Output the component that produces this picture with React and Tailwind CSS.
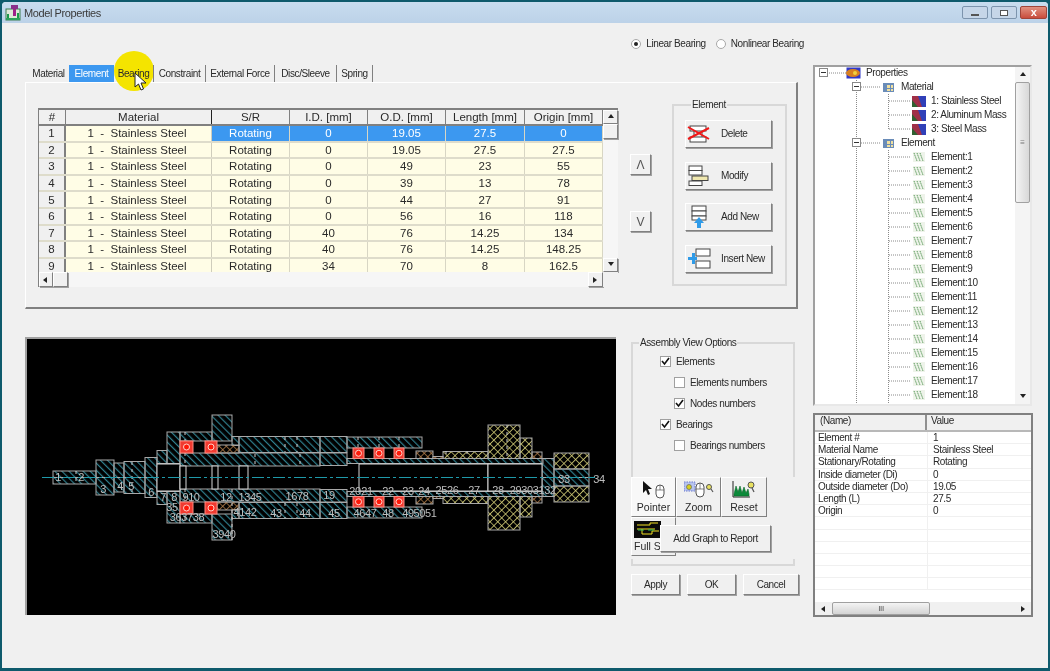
import React from "react";

const tabs = ["Material", "Element", "Bearing", "Constraint", "External Force", "Disc/Sleeve", "Spring"];
const tabWidths = ["w-[41px]", "w-[45px]", "w-[40px]", "w-[52px]", "w-[69px]", "w-[62px]", "w-[36px]"];

const columns = [
  { label: "#", width: "w-[27px]" },
  { label: "Material", width: "w-[146px]" },
  { label: "S/R", width: "w-[78px]" },
  { label: "I.D. [mm]", width: "w-[78px]" },
  { label: "O.D. [mm]", width: "w-[78px]" },
  { label: "Length [mm]", width: "w-[79px]" },
  { label: "Origin [mm]", width: "w-[78px]" },
];

const rows = [
  ["0", "19.05", "27.5", "0"],
  ["0", "19.05", "27.5", "27.5"],
  ["0", "49", "23", "55"],
  ["0", "39", "13", "78"],
  ["0", "44", "27", "91"],
  ["0", "56", "16", "118"],
  ["40", "76", "14.25", "134"],
  ["40", "76", "14.25", "148.25"],
  ["34", "70", "8", "162.5"],
];

const properties = [
  ["Element #", "1"],
  ["Material Name", "Stainless Steel"],
  ["Stationary/Rotating", "Rotating"],
  ["Inside diameter (Di)", "0"],
  ["Outside diameter (Do)", "19.05"],
  ["Length (L)", "27.5"],
  ["Origin", "0"],
  ["", ""],
  ["", ""],
  ["", ""],
  ["", ""],
  ["", ""],
  ["", ""],
];

const raised = "bg-[#f0f0f0] border border-t-white border-l-white border-r-[#808080] border-b-[#808080] shadow-[1px_1px_0_#a0a0a0]";

function Arrow({ dir }) {
  const points = {
    up: "0,4 3,0 6,4",
    down: "0,0 3,4 6,0",
    left: "4,0 0,3 4,6",
    right: "0,0 4,3 0,6",
  };
  return (
    <svg width="6" height="6" viewBox="0 0 6 6">
      <polygon points={points[dir]} fill="#222" />
    </svg>
  );
}

function ScrollBtn({ dir, className = "" }) {
  return (
    <div className={`flex shrink-0 items-center justify-center ${raised} ${className}`}>
      <Arrow dir={dir} />
    </div>
  );
}

function AppIcon() {
  return (
    <svg width="16" height="16" viewBox="0 0 16 16">
      <rect x="1" y="4" width="14" height="11" fill="#dfe8d8" stroke="#3d7d50" />
      <rect x="2" y="9" width="2" height="6" fill="#1b9a4a" />
      <rect x="6" y="0" width="7" height="4" fill="#8a2f8a" />
      <rect x="8" y="4" width="3" height="7" fill="#a0208a" />
      <rect x="12" y="8" width="2" height="7" fill="#1b9a4a" />
      <rect x="1" y="13" width="14" height="2" fill="#2ea05a" />
    </svg>
  );
}

function DeleteIcon() {
  return (
    <svg width="24" height="18" viewBox="0 0 24 18">
      <rect x="3" y="1" width="16" height="5" fill="#fff" stroke="#444" />
      <rect x="3" y="12" width="16" height="5" fill="#fff" stroke="#444" />
      <path d="M7 6 V12 M15 6 V12" stroke="#444" />
      <path d="M1 2 L22 14 M1 14 L22 3" stroke="#f01818" strokeWidth="2" />
    </svg>
  );
}

function ModifyIcon() {
  return (
    <svg width="22" height="22" viewBox="0 0 22 22">
      <rect x="1" y="1" width="13" height="4.5" fill="#fff" stroke="#444" />
      <rect x="1" y="5.5" width="13" height="4.5" fill="#fff" stroke="#444" />
      <rect x="1" y="16" width="13" height="4.5" fill="#fff" stroke="#444" />
      <rect x="4" y="11" width="16" height="4.5" fill="#f0e8b0" stroke="#444" />
    </svg>
  );
}

function AddIcon() {
  return (
    <svg width="18" height="24" viewBox="0 0 18 24">
      <rect x="2" y="1" width="14" height="5" fill="#fff" stroke="#444" />
      <rect x="2" y="6" width="14" height="5" fill="#fff" stroke="#444" />
      <rect x="2" y="11" width="14" height="4" fill="#fff" stroke="#444" />
      <path d="M9 12 L14 18 H11 V23 H7 V18 H4 Z" fill="#2f9be8" />
    </svg>
  );
}

function InsertIcon() {
  return (
    <svg width="24" height="22" viewBox="0 0 24 22">
      <rect x="9" y="1" width="14" height="7" fill="#fff" stroke="#444" />
      <rect x="9" y="13" width="14" height="7" fill="#fff" stroke="#444" />
      <path d="M1 9 H5 V5 H8 V9 H10 V12 H8 V16 H5 V12 H1 Z" fill="#2f9be8" />
    </svg>
  );
}

function ActionButton({ icon, label }) {
  return (
    <div className={`flex h-[28px] w-[87px] items-center ${raised}`}>
      <div className="flex w-[26px] shrink-0 justify-center">{icon}</div>
      <span className="ml-[9px] whitespace-nowrap">{label}</span>
    </div>
  );
}

function PointerIcon() {
  return (
    <svg width="24" height="20" viewBox="0 0 24 20">
      <path d="M1 1 V13 L4 10 L6 15 L8 14 L6 9 H10 Z" fill="#111" />
      <rect x="14" y="5" width="8" height="13" rx="4" fill="#fff" stroke="#555" />
      <path d="M14 10 H22 M18 5 V10" stroke="#555" strokeWidth="0.7" />
    </svg>
  );
}

function ZoomIcon() {
  return (
    <svg width="30" height="20" viewBox="0 0 30 20">
      <rect x="0" y="2" width="11" height="9" fill="#b8c4ee" stroke="#6a7ad0" strokeDasharray="1.5 1" />
      <circle cx="5" cy="7" r="2.5" fill="#d8d020" stroke="#555" strokeWidth="0.6" />
      <rect x="12" y="3" width="8" height="14" rx="4" fill="#fff" stroke="#555" />
      <path d="M12 9 H20 M16 3 V9" stroke="#555" strokeWidth="0.7" />
      <circle cx="25" cy="7" r="2.5" fill="#e8e060" stroke="#555" />
      <path d="M27 9 L29 12" stroke="#555" strokeWidth="1.2" />
    </svg>
  );
}

function ResetIcon() {
  return (
    <svg width="24" height="20" viewBox="0 0 24 20">
      <path d="M1 1 V17 H18" stroke="#222" fill="none" />
      <path d="M2 14 L4 6 L6 12 L8 6 L10 13 L12 7 L14 13 L16 9 L17 14 V16 H2 Z" fill="#0b8a3a" stroke="#0b6a2a" strokeWidth="0.6" />
      <circle cx="19" cy="5" r="3" fill="#e8e060" stroke="#555" />
      <path d="M20 8 L22 12" stroke="#555" strokeWidth="1.2" />
    </svg>
  );
}

function FullIcon() {
  return (
    <svg width="27" height="17" viewBox="0 0 27 17">
      <rect width="27" height="17" fill="#0a0a0a" />
      <path d="M3 4 H16 V2 H24 M3 8 H12 M8 8 V13 H18 V10 H25 M12 8 H21" stroke="#f2e020" fill="none" />
      <path d="M4 9 H10 M14 9 H20" stroke="#2cc45a" />
    </svg>
  );
}

function ToolButton({ icon, label, active = false, className = "" }) {
  return (
    <div className={`flex w-[45px] flex-col items-center justify-end border border-t-white border-l-white border-r-[#808080] border-b-[#808080] pb-[2px] ${active ? "bg-[#f8f8f8]" : "bg-[#f0f0f0]"} ${className}`}>
      <div className="flex h-[22px] items-center">{icon}</div>
      <span className="h-[13px] text-[10.5px] leading-[13px] tracking-normal">{label}</span>
    </div>
  );
}

function Checkbox({ checked }) {
  return (
    <span className="flex h-[11px] w-[11px] shrink-0 items-center justify-center border border-[#a0a0a0] bg-white">
      {checked && (
        <svg width="9" height="9" viewBox="0 0 9 9">
          <path d="M1 4 L3.5 7 L8 1" stroke="#111" strokeWidth="1.6" fill="none" />
        </svg>
      )}
    </span>
  );
}

function CheckRow({ label, checked, indent }) {
  return (
    <div className={`flex h-[21px] items-center gap-[5px] ${indent ? "pl-[41px]" : "pl-[27px]"}`}>
      <Checkbox checked={checked} />
      <span>{label}</span>
    </div>
  );
}

function Radio({ checked }) {
  return (
    <span className="flex h-[10px] w-[10px] items-center justify-center rounded-full border border-[#a8a8a8] bg-white">
      {checked && <span className="h-[4px] w-[4px] rounded-full bg-[#222]" />}
    </span>
  );
}

// Shaft drawing: [x0, x1, outer radius, inner radius, hatch], mirrored about the axis
const axis = 477.5;
const sections = [
  [53, 96, 6.5, 0, "t"],
  [96, 114, 17.5, 0, "t"],
  [114, 124, 14.5, 0, "t"],
  [124, 145, 16, 0, "t"],
  [145, 157, 20, 0, "t"],
  [157, 167, 27, 14, "t"],
  [167, 180, 45.5, 14, "t"],
  [180, 212, 45.5, 36.5, "t"],
  [212, 232, 62.5, 36.5, "t"],
  [232, 239, 41, 32, "t"],
  [239, 320, 41, 25, "t"],
  [320, 347, 41, 25, "t"],
  [347, 422, 40.5, 29.5, "t"],
  [180, 320, 24.5, 11.5, "t"],
  [320, 347, 24.5, 12, "t"],
  [347, 543, 19, 14, "t"],
  [416, 433, 26.5, 19, "b"],
  [433, 443, 21, 19, "b"],
  [443, 488, 26, 19, "y"],
  [488, 520, 52.5, 19, "y"],
  [520, 532, 39.5, 19, "y"],
  [532, 542, 25.5, 19, "b"],
  [542, 554, 19, 0, "t"],
  [554, 589, 24.5, 8.5, "y"],
  [554, 589, 8.5, 0, "t"],
  [217, 239, 32.5, 24.5, "b"],
];

const bearings = [
  [180, 193, 36.5, 24.5],
  [205, 217, 36.5, 24.5],
  [353, 364, 29.5, 19],
  [374, 384, 29.5, 19],
  [394, 404, 29.5, 19],
];

const bores = [
  [157, 180, 13.5],
  [180, 186, 11.5],
  [212, 218, 11.5],
  [239, 248, 11.5],
  [359, 488, 13.5],
  [488, 542, 13.5],
];

const dividers = [
  [185, 432, 466], [285, 437, 452], [297, 437, 452], [255, 454, 466], [300, 454, 466],
  [358, 437, 448], [379, 437, 448], [399, 437, 448], [507, 425, 458], [446, 451, 458], [467, 451, 458],
  [76, 471, 484], [132, 462, 492], [185, 489, 522], [232, 489, 540], [285, 503, 518], [297, 503, 518],
];

const nodeLabels = [
  ["1", 58, 481], ["2", 81, 481], ["3", 103, 493], ["4", 120, 490], ["5", 131, 490], ["6", 151, 496],
  ["7", 163, 501], ["8", 174, 501], ["910", 191, 501], ["12", 226, 501], ["1345", 250, 501],
  ["1678", 297, 500], ["19", 329, 499],
  ["20", 355, 495], ["21", 367, 495], ["22", 388, 495], ["23", 408, 495], ["24", 424, 495],
  ["2526", 447, 494], ["27", 474, 494], ["28", 498, 494], ["293031", 527, 494],
  ["32", 550, 494], ["33", 564, 483], ["34", 599, 483],
  ["35", 172, 511], ["363738", 187, 521], ["3940", 224, 538],
  ["4142", 245, 516], ["43", 276, 517], ["44", 305, 517], ["45", 334, 517], ["4647", 365, 517],
  ["48", 388, 517], ["49", 408, 517], ["5051", 425, 517],
];

const hatchFill = { t: "url(#hatchTeal)", y: "url(#hatchYellow)", b: "url(#hatchBronze)" };

function ShaftDrawing() {
  return (
    <svg className="block" width="589" height="276" viewBox="27 339 589 276">
      <defs>
        <pattern id="hatchTeal" width="5" height="5" patternUnits="userSpaceOnUse" patternTransform="rotate(-45)">
          <line x1="0" y1="0" x2="0" y2="5" stroke="#2f7f8e" strokeWidth="2.4" />
        </pattern>
        <pattern id="hatchYellow" width="5.5" height="5.5" patternUnits="userSpaceOnUse" patternTransform="rotate(45)">
          <path d="M0 0 V5.5 M0 0 H5.5" stroke="#d8d27a" strokeWidth="1.6" />
        </pattern>
        <pattern id="hatchBronze" width="5" height="5" patternUnits="userSpaceOnUse" patternTransform="rotate(45)">
          <path d="M0 0 V5 M0 0 H5" stroke="#b07c48" strokeWidth="1.6" />
        </pattern>
      </defs>
      <rect x="27" y="339" width="589" height="276" fill="#000" />
      {sections.map(([x0, x1, ro, ri, kind], i) => (
        <g key={i} fill={hatchFill[kind]} stroke="#a8a8a8">
          <rect x={x0} y={axis - ro} width={x1 - x0} height={ro - ri} />
          <rect x={x0} y={axis + ri} width={x1 - x0} height={ro - ri} />
        </g>
      ))}
      {dividers.map(([x, y0, y1], i) => (
        <line key={i} x1={x} y1={y0} x2={x} y2={y1} stroke="#cfcfcf" strokeDasharray="3 4" />
      ))}
      {bores.map(([x0, x1, r], i) => (
        <rect key={i} x={x0} y={axis - r} width={x1 - x0} height={r * 2} fill="#000" stroke="#d8d8d8" />
      ))}
      {bearings.map(([x0, x1, ro, ri], i) => (
        <g key={i}>
          {[axis - ro, axis + ri].map((y) => (
            <g key={y}>
              <rect x={x0} y={y} width={x1 - x0} height={ro - ri} fill="#f03a30" stroke="#ff8a80" />
              <circle cx={(x0 + x1) / 2} cy={y + (ro - ri) / 2} r="3" fill="#ff1808" stroke="#ffd0c8" />
            </g>
          ))}
        </g>
      ))}
      <line x1="42" y1="477.5" x2="595" y2="477.5" stroke="#1f9aaa" strokeWidth="1.2" strokeDasharray="12 3 3 3" />
      {nodeLabels.map(([t, x, y]) => (
        <text key={t} x={x} y={y} textAnchor="middle" fontSize="11" fill="#bdbdbd" fontFamily="'Liberation Sans', sans-serif">
          {t}
        </text>
      ))}
    </svg>
  );
}

function RootIcon() {
  return (
    <svg width="15" height="12" viewBox="0 0 15 12">
      <rect x="0.5" y="0.5" width="14" height="11" fill="#3038c8" />
      <ellipse cx="7" cy="6" rx="7" ry="4" fill="#d88020" />
      <circle cx="9" cy="6" r="2" fill="#f0d040" />
    </svg>
  );
}

function TableIcon() {
  return (
    <svg width="11" height="9" viewBox="0 0 11 9">
      <rect width="11" height="9" fill="#6a8cb8" />
      <rect x="4" y="2" width="3" height="3" fill="#f0e0a0" />
      <rect x="8" y="2" width="2" height="3" fill="#f0e0a0" />
      <rect x="4" y="6" width="3" height="2" fill="#f0e0a0" />
      <rect x="8" y="6" width="2" height="2" fill="#f0e0a0" />
    </svg>
  );
}

function MaterialIcon() {
  return (
    <svg width="14" height="11" viewBox="0 0 14 11">
      <rect width="14" height="11" fill="#3040b8" />
      <path d="M0 0 H6 L10 11 H0 Z" fill="#a03048" />
      <path d="M0 4 L6 11 H0 Z" fill="#306030" />
    </svg>
  );
}

function ElementIcon() {
  return (
    <svg width="12" height="10" viewBox="0 0 12 10">
      <rect width="12" height="10" fill="#eef3ea" />
      <path d="M1 1 L4 9 M4 1 L7 9 M7 1 L10 9" stroke="#5a9a5a" strokeDasharray="1.5 0.8" />
    </svg>
  );
}

// Dotted guides and +/- boxes at the front of a tree row
function TreeGuides({ level, toggle, last }) {
  const width = [31, 66, 96][level];
  const dot = { stroke: "#8a8a8a", strokeDasharray: "1 1" };
  return (
    <svg className="shrink-0" width={width} height="14" viewBox={`0 0 ${width} 14`}>
      {level === 0 && <line x1="14" y1="7" x2="31" y2="7" {...dot} />}
      {level >= 1 && <line x1="41.5" y1="0" x2="41.5" y2="14" {...dot} />}
      {level === 1 && <line x1="46" y1="7" x2="65" y2="7" {...dot} />}
      {level === 2 && <line x1="73.5" y1="0" x2="73.5" y2={last ? 7 : 14} {...dot} />}
      {level === 2 && <line x1="74" y1="7" x2="95" y2="7" {...dot} />}
      {toggle && (
        <g>
          <rect x={level === 0 ? 4.5 : 37.5} y="2.5" width="8" height="8" fill="#fff" stroke="#888" />
          <line x1={level === 0 ? 6 : 39} y1="6.5" x2={level === 0 ? 11 : 44} y2="6.5" stroke="#333" />
        </g>
      )}
    </svg>
  );
}

function TreeRow({ level, toggle, icon, label, last }) {
  return (
    <div className="flex h-[14px] items-center">
      <TreeGuides level={level} toggle={toggle} last={last} />
      <span className="flex w-[15px] shrink-0 justify-center">{icon}</span>
      <span className="ml-[5px] whitespace-nowrap">{label}</span>
    </div>
  );
}

const elementNumbers = Array.from({ length: 19 }, (_, i) => i + 1);

export default function App() {
  return (
    <div className="relative h-[671px] w-[1050px] overflow-hidden bg-[#0e5a6c] px-[2px] pb-[3px] pt-[2px] font-['Liberation_Sans',sans-serif] text-[10px] leading-[12px] tracking-[-0.4px] text-[#2a2a2a] blur-[0.35px]">
      <div className="flex h-full flex-col rounded-t-[4px] bg-[#f0f0f0]">
        {/* Title bar */}
        <div className="flex h-[21px] shrink-0 items-center rounded-t-[4px] bg-gradient-to-b from-[#c8dcef] to-[#bcd2e8] pl-[3px]">
          <AppIcon />
          <span className="ml-[3px] text-[11px] text-[#3a3a3a]">Model Properties</span>
          <div className="ml-auto mr-[1px] flex gap-[3px]">
            <div className="flex h-[13px] w-[26px] items-end justify-center rounded-[2px] border border-[#7d94ad] bg-[#c6d6e8] pb-[2px]">
              <span className="h-[2px] w-[8px] border border-[#555] bg-white" />
            </div>
            <div className="flex h-[13px] w-[26px] items-center justify-center rounded-[2px] border border-[#7d94ad] bg-[#c6d6e8]">
              <span className="h-[6px] w-[8px] border border-[#555] bg-white" />
            </div>
            <div className="flex h-[13px] w-[27px] items-center justify-center rounded-[2px] border border-[#a04438] bg-gradient-to-b from-[#e09080] to-[#c84c3c] text-[11px] font-bold leading-none text-white">
              x
            </div>
          </div>
        </div>

        <div className="flex min-h-0 flex-1">
          {/* Left side */}
          <div className="ml-[23px] w-[783px] shrink-0">
            <div className="mt-[15px] flex h-[12px] items-center justify-end pr-[4px]">
              <Radio checked />
              <span className="ml-[5px]">Linear Bearing</span>
              <span className="ml-[10px]"><Radio /></span>
              <span className="ml-[5px]">Nonlinear Bearing</span>
            </div>

            {/* Tabs, kept above the click highlight */}
            <div className="relative z-10 mt-[15px] flex h-[17px] items-end pl-[3px]">
              {tabs.map((tab, i) => (
                <div
                  key={tab}
                  className={`flex h-[17px] items-center justify-center pt-[1px] ${tabWidths[i]} ${
                    i === 1 ? "bg-[#3c98f0] text-white" : i === 0 ? "" : "border-r border-r-[#808080]"
                  }`}
                >
                  {tab}
                </div>
              ))}
            </div>

            {/* Tab panel */}
            <div className="flex h-[227px] w-[773px] border-b-2 border-l border-r-2 border-t border-b-[#808080] border-l-white border-r-[#808080] border-t-white pl-[12px] pt-[25px]">
              {/* Element table */}
              <div className="h-[179px] w-[580px] shrink-0 border-l border-t-2 border-[#808080] tracking-normal">
                <div className="flex h-[162px]">
                  <div className="w-[564px] overflow-hidden">
                    <div className="flex h-[16px] border-b-2 border-[#808080]">
                      {columns.map((col, i) => (
                        <div
                          key={col.label}
                          className={`flex items-center justify-center border-r ${i === 1 ? "border-r-[#222]" : "border-r-[#808080]"} ${col.width} text-[11.5px]`}
                        >
                          {col.label}
                        </div>
                      ))}
                    </div>
                    {rows.map((row, r) => (
                      <div key={r} className="flex h-[16.6px] border-b-2 border-[#dedccb] text-[11.5px]">
                        <div className="flex w-[27px] items-center justify-center border-r-2 border-r-[#808080] bg-[#f0f0f0]">{r + 1}</div>
                        <div className="flex w-[146px] items-center justify-center whitespace-pre border-r border-r-[#cfcdbc] bg-[#fffde6] pr-[3px]">1  -  Stainless Steel</div>
                        {["Rotating", ...row].map((cell, c) => (
                          <div
                            key={c}
                            className={`flex items-center justify-center border-r border-r-[#d8d6c4] ${columns[c + 2].width} ${r === 0 ? "bg-[#3c98f0] text-white" : "bg-[#fffde6]"}`}
                          >
                            {cell}
                          </div>
                        ))}
                      </div>
                    ))}
                  </div>
                  <div className="flex w-[15px] flex-col bg-[#f6f6f6]">
                    <ScrollBtn dir="up" className="h-[14px]" />
                    <div className={`h-[15px] ${raised}`} />
                    <div className="flex-1" />
                    <ScrollBtn dir="down" className="h-[14px]" />
                  </div>
                </div>
                <div className="flex h-[15px] bg-[#f6f6f6]">
                  <ScrollBtn dir="left" className="w-[14px]" />
                  <div className={`w-[15px] ${raised}`} />
                  <div className="flex-1" />
                  <ScrollBtn dir="right" className="w-[15px]" />
                  <div className="w-[15px] bg-[#f0f0f0]" />
                </div>
              </div>

              {/* Up and down */}
              <div className="ml-[12px] flex w-[21px] shrink-0 flex-col gap-[36px] pt-[46px] tracking-normal">
                <div className={`flex h-[21px] items-center justify-center text-[12px] text-[#555] ${raised}`}>Λ</div>
                <div className={`flex h-[21px] items-center justify-center text-[12px] text-[#555] ${raised}`}>V</div>
              </div>

              {/* Element buttons */}
              <fieldset className="ml-[21px] h-[187px] w-[115px] shrink-0 -translate-y-[9px] border-2 border-[#d8d8d8] pl-[11px] pt-[9px]">
                <legend className="ml-[6px] px-[1px]">Element</legend>
                <div className="flex flex-col gap-[13.5px]">
                  <ActionButton icon={<DeleteIcon />} label="Delete" />
                  <ActionButton icon={<ModifyIcon />} label="Modify" />
                  <ActionButton icon={<AddIcon />} label="Add New" />
                  <ActionButton icon={<InsertIcon />} label="Insert New" />
                </div>
              </fieldset>
            </div>

            {/* Lower row */}
            <div className="mt-[28px] flex">
              <div className="border-l-2 border-t-2 border-[#a0a0a0]">
                <ShaftDrawing />
              </div>
              <div className="ml-[15px] w-[168px] shrink-0">
                <fieldset className="h-[229px] w-[164px] border-2 border-[#d8d8d8]">
                  <legend className="ml-[6px] px-[1px]">Assembly View Options</legend>
                  <div className="mt-[2px]">
                    <CheckRow label="Elements" checked />
                    <CheckRow label="Elements numbers" indent />
                    <CheckRow label="Nodes numbers" checked indent />
                    <CheckRow label="Bearings" checked />
                    <CheckRow label="Bearings numbers" indent />
                  </div>
                  {/* Graph toolbar */}
                  <div className="relative z-10 -ml-[2px] -mr-[2px] mt-[21px] h-[82px] w-[164px] bg-[#f0f0f0]">
                    <div className="flex h-[40px]">
                      <ToolButton icon={<PointerIcon />} label="Pointer" active />
                      <ToolButton icon={<ZoomIcon />} label="Zoom" />
                      <ToolButton icon={<ResetIcon />} label="Reset" className="w-[46px]" />
                    </div>
                    <ToolButton icon={<FullIcon />} label="Full S" className="h-[39px] !items-start pl-[2px]" />
                    <div className={`absolute left-[29px] top-[48px] flex h-[27px] w-[111px] items-center justify-center ${raised}`}>
                      Add Graph to Report
                    </div>
                  </div>
                </fieldset>
                <div className="mt-[8px] flex gap-[7px]">
                  <div className={`flex h-[21px] w-[49px] items-center justify-center ${raised}`}>Apply</div>
                  <div className={`flex h-[21px] w-[49px] items-center justify-center ${raised}`}>OK</div>
                  <div className={`flex h-[21px] w-[56px] items-center justify-center ${raised}`}>Cancel</div>
                </div>
              </div>
            </div>
          </div>

          {/* Right side */}
          <div className="ml-[5px] w-[220px] shrink-0 pt-[42px]">
            <div className="flex h-[341px] w-[219px] overflow-hidden border-2 border-b-[#e8e8e8] border-l-[#a0a0a0] border-r-[#e8e8e8] border-t-[#a0a0a0] bg-white">
              <div className="-mt-[1px] min-w-0 flex-1 overflow-hidden">
                <TreeRow level={0} toggle icon={<RootIcon />} label="Properties" />
                <TreeRow level={1} toggle icon={<TableIcon />} label="Material" />
                <TreeRow level={2} icon={<MaterialIcon />} label="1: Stainless Steel" />
                <TreeRow level={2} icon={<MaterialIcon />} label="2: Aluminum Mass" />
                <TreeRow level={2} icon={<MaterialIcon />} label="3: Steel Mass" last />
                <TreeRow level={1} toggle icon={<TableIcon />} label="Element" />
                {elementNumbers.map((n) => (
                  <TreeRow key={n} level={2} icon={<ElementIcon />} label={`Element:${n}`} />
                ))}
              </div>
              <div className="flex w-[15px] shrink-0 flex-col bg-[#f4f4f4]">
                <div className="flex h-[15px] items-center justify-center"><Arrow dir="up" /></div>
                <div className="flex h-[121px] items-center justify-center rounded-[2px] border border-[#a0a0a0] bg-gradient-to-r from-[#f4f4f4] to-[#d8d8d8] text-[8px] text-[#777]">≡</div>
                <div className="flex-1" />
                <div className="flex h-[15px] items-center justify-center"><Arrow dir="down" /></div>
              </div>
            </div>

            {/* Property grid */}
            <div className="mt-[7px] flex h-[204px] w-[220px] flex-col border-2 border-[#808080] bg-white">
              <div className="flex h-[17px] shrink-0 border-b-2 border-[#b8b8b8] bg-[#f0f0f0]">
                <div className="w-[112px] border-r-2 border-r-[#909090] pl-[5px]">(Name)</div>
                <div className="pl-[4px]">Value</div>
              </div>
              <div className="min-h-0 flex-1 overflow-hidden">
                {properties.map(([name, value], i) => (
                  <div key={i} className="flex h-[12.2px] border-b border-[#f0f0f0] leading-[12px]">
                    <div className="w-[113px] overflow-hidden whitespace-nowrap border-r border-r-[#f0f0f0] pl-[3px]">{name}</div>
                    <div className="pl-[5px]">{value}</div>
                  </div>
                ))}
              </div>
              <div className="flex h-[13px] shrink-0 items-center bg-[#f0f0f0]">
                <div className="flex w-[17px] justify-center"><Arrow dir="left" /></div>
                <div className="flex h-[13px] w-[98px] items-center justify-center rounded-[2px] border border-[#a0a0a0] bg-gradient-to-b from-[#f4f4f4] to-[#d4d4d4] text-[8px] text-[#555]">III</div>
                <div className="flex-1" />
                <div className="flex w-[14px] justify-center"><Arrow dir="right" /></div>
              </div>
            </div>
          </div>
        </div>
      </div>

      {/* Click highlight and mouse cursor */}
      <div className="absolute left-[114px] top-[51px] z-[5] h-[40px] w-[40px] rounded-full bg-[#f4e400]" />
      <svg className="absolute left-[134px] top-[72px] z-20" width="13" height="19" viewBox="0 0 13 19">
        <path d="M1 1 V15 L4.5 12 L7 18 L9.5 17 L7 11 H12 Z" fill="#fff" stroke="#222" />
      </svg>
    </div>
  );
}
